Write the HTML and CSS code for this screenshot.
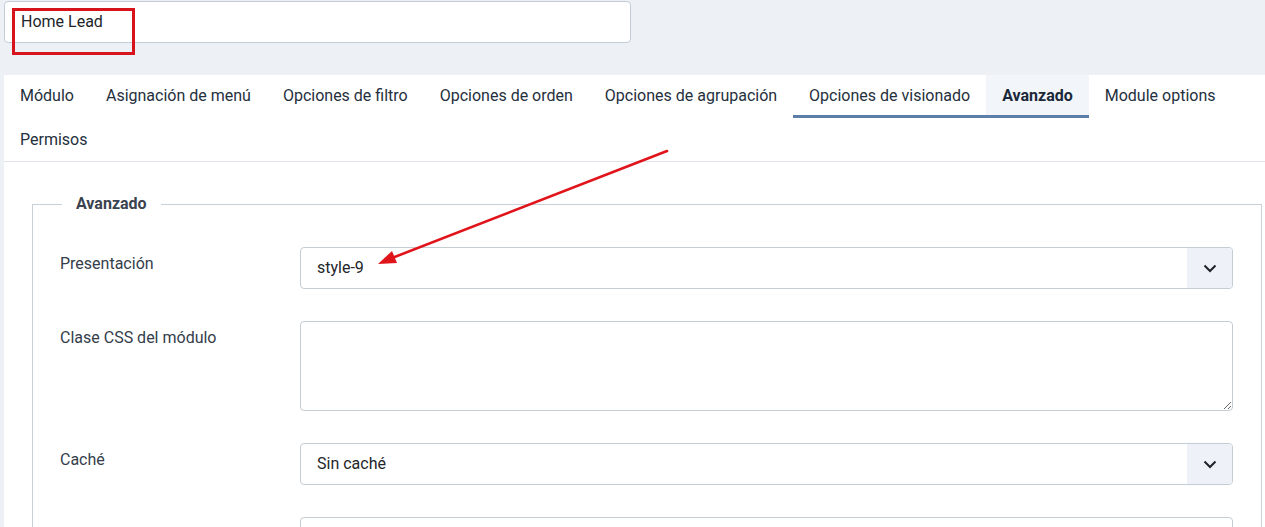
FILE: index.html
```html
<!DOCTYPE html>
<html lang="es">
<head>
<meta charset="utf-8">
<title>Módulo</title>
<link rel="stylesheet" href="styles.css">
</head>
<body>
<div class="top">
  <div class="title-input">Home Lead</div>
</div>
<div class="panel">
  <nav class="tabs">
    <span class="tab">Módulo</span>
    <span class="tab">Asignación de menú</span>
    <span class="tab">Opciones de filtro</span>
    <span class="tab">Opciones de orden</span>
    <span class="tab">Opciones de agrupación</span>
    <span class="tab tab-hover">Opciones de visionado</span>
    <span class="tab tab-active">Avanzado</span>
    <span class="tab">Module options</span>
    <span class="tab tab-second">Permisos</span>
  </nav>
  <div class="content">
    <fieldset class="group">
      <legend>Avanzado</legend>
      <div class="row">
        <label class="lbl">Presentación</label>
        <div class="select">
          <span class="select-text">style-9</span>
          <span class="select-btn"><svg width="14" height="9" viewBox="0 0 14 9"><path d="M1.5 1.5l5.5 5.5 5.5-5.5" fill="none" stroke="#1f2329" stroke-width="2"/></svg></span>
        </div>
      </div>
      <div class="row">
        <label class="lbl">Clase CSS del módulo</label>
        <textarea class="area"></textarea>
      </div>
      <div class="row">
        <label class="lbl">Caché</label>
        <div class="select">
          <span class="select-text">Sin caché</span>
          <span class="select-btn"><svg width="14" height="9" viewBox="0 0 14 9"><path d="M1.5 1.5l5.5 5.5 5.5-5.5" fill="none" stroke="#1f2329" stroke-width="2"/></svg></span>
        </div>
      </div>
      <div class="row">
        <span class="lbl"></span>
        <div class="select"></div>
      </div>
    </fieldset>
  </div>
</div>
<div class="redbox"></div>
<svg class="arrow" width="1265" height="527" viewBox="0 0 1265 527">
  <line x1="667" y1="151" x2="392" y2="258" stroke="#e0141b" stroke-width="2.6" stroke-linecap="round"/>
  <polygon points="378,264 392,251 397,263" fill="#e0141b"/>
</svg>
</body>
</html>
```
FILE: styles.css
```css
html, body {
  margin: 0;
  padding: 0;
}
body {
  background: #edf1f6;
  font-family: Roboto, "Liberation Sans", Arial, sans-serif;
  font-size: 16px;
  color: #22262a;
  width: 1265px;
  height: 527px;
  overflow: hidden;
  position: relative;
}
.top {
  padding: 1px 0 0 4px;
  box-sizing: border-box;
  height: 75px;
}
.title-input {
  width: 627px;
  height: 42px;
  box-sizing: border-box;
  background: #fff;
  border: 1px solid #c3ccd6;
  border-radius: 4px;
  padding: 10px 16px 0 16px;
  font-size: 16px;
  line-height: 20px;
  color: #22262a;
}
.panel {
  margin-left: 4px;
  background: #fff;
  height: 452px;
}
.tabs {
  display: flex;
  flex-wrap: wrap;
  border-bottom: 1px solid #dfe3e8;
}
.tab {
  height: 43px;
  box-sizing: border-box;
  padding: 11px 16px 0 16px;
  line-height: 20px;
  font-size: 16px;
  color: #25303d;
  border-bottom: 3px solid transparent;
  white-space: nowrap;
}
.tab-second {
  padding-top: 12px;
}
.tab-hover {
  border-bottom-color: #5b7fa9;
}
.tab-active {
  border-bottom-color: #5b7fa9;
  background: #f2f5f9;
  font-weight: 700;
  color: #1a283a;
}
.content {
  padding: 30px 0 0 28px;
}
.group {
  margin: 0;
  width: 1230px;
  box-sizing: border-box;
  border: 1px solid #c8d0d8;
  padding: 31px 28px 0 27px;
  min-width: 0;
}
.group legend {
  margin-left: 2px;
  padding: 0 14px;
  font-weight: 700;
  font-size: 16px;
  line-height: 24px;
  color: #3a434f;
}
.row {
  display: flex;
  margin-bottom: 32px;
}
.lbl {
  width: 240px;
  flex: none;
  padding-top: 5px;
  line-height: 24px;
  font-size: 16px;
  color: #343d4a;
}
.select {
  flex: 1;
  height: 42px;
  box-sizing: border-box;
  border: 1px solid #c4ccd4;
  border-radius: 4px;
  display: flex;
  align-items: stretch;
  overflow: hidden;
}
.select-text {
  flex: 1;
  padding: 10px 16px 0 16px;
  line-height: 20px;
  font-size: 16px;
  color: #22262a;
}
.select-btn {
  width: 45px;
  background: #eef2f8;
  display: flex;
  align-items: center;
  justify-content: center;
}
.area {
  flex: 1;
  height: 90px;
  box-sizing: border-box;
  border: 1px solid #c4ccd4;
  border-radius: 4px;
  margin: 0;
  font-family: inherit;
}
.redbox {
  position: absolute;
  left: 12px;
  top: 8px;
  width: 123px;
  height: 47px;
  box-sizing: border-box;
  border: 3px solid #d7141c;
}
.arrow {
  position: absolute;
  left: 0;
  top: 0;
  pointer-events: none;
}
```
